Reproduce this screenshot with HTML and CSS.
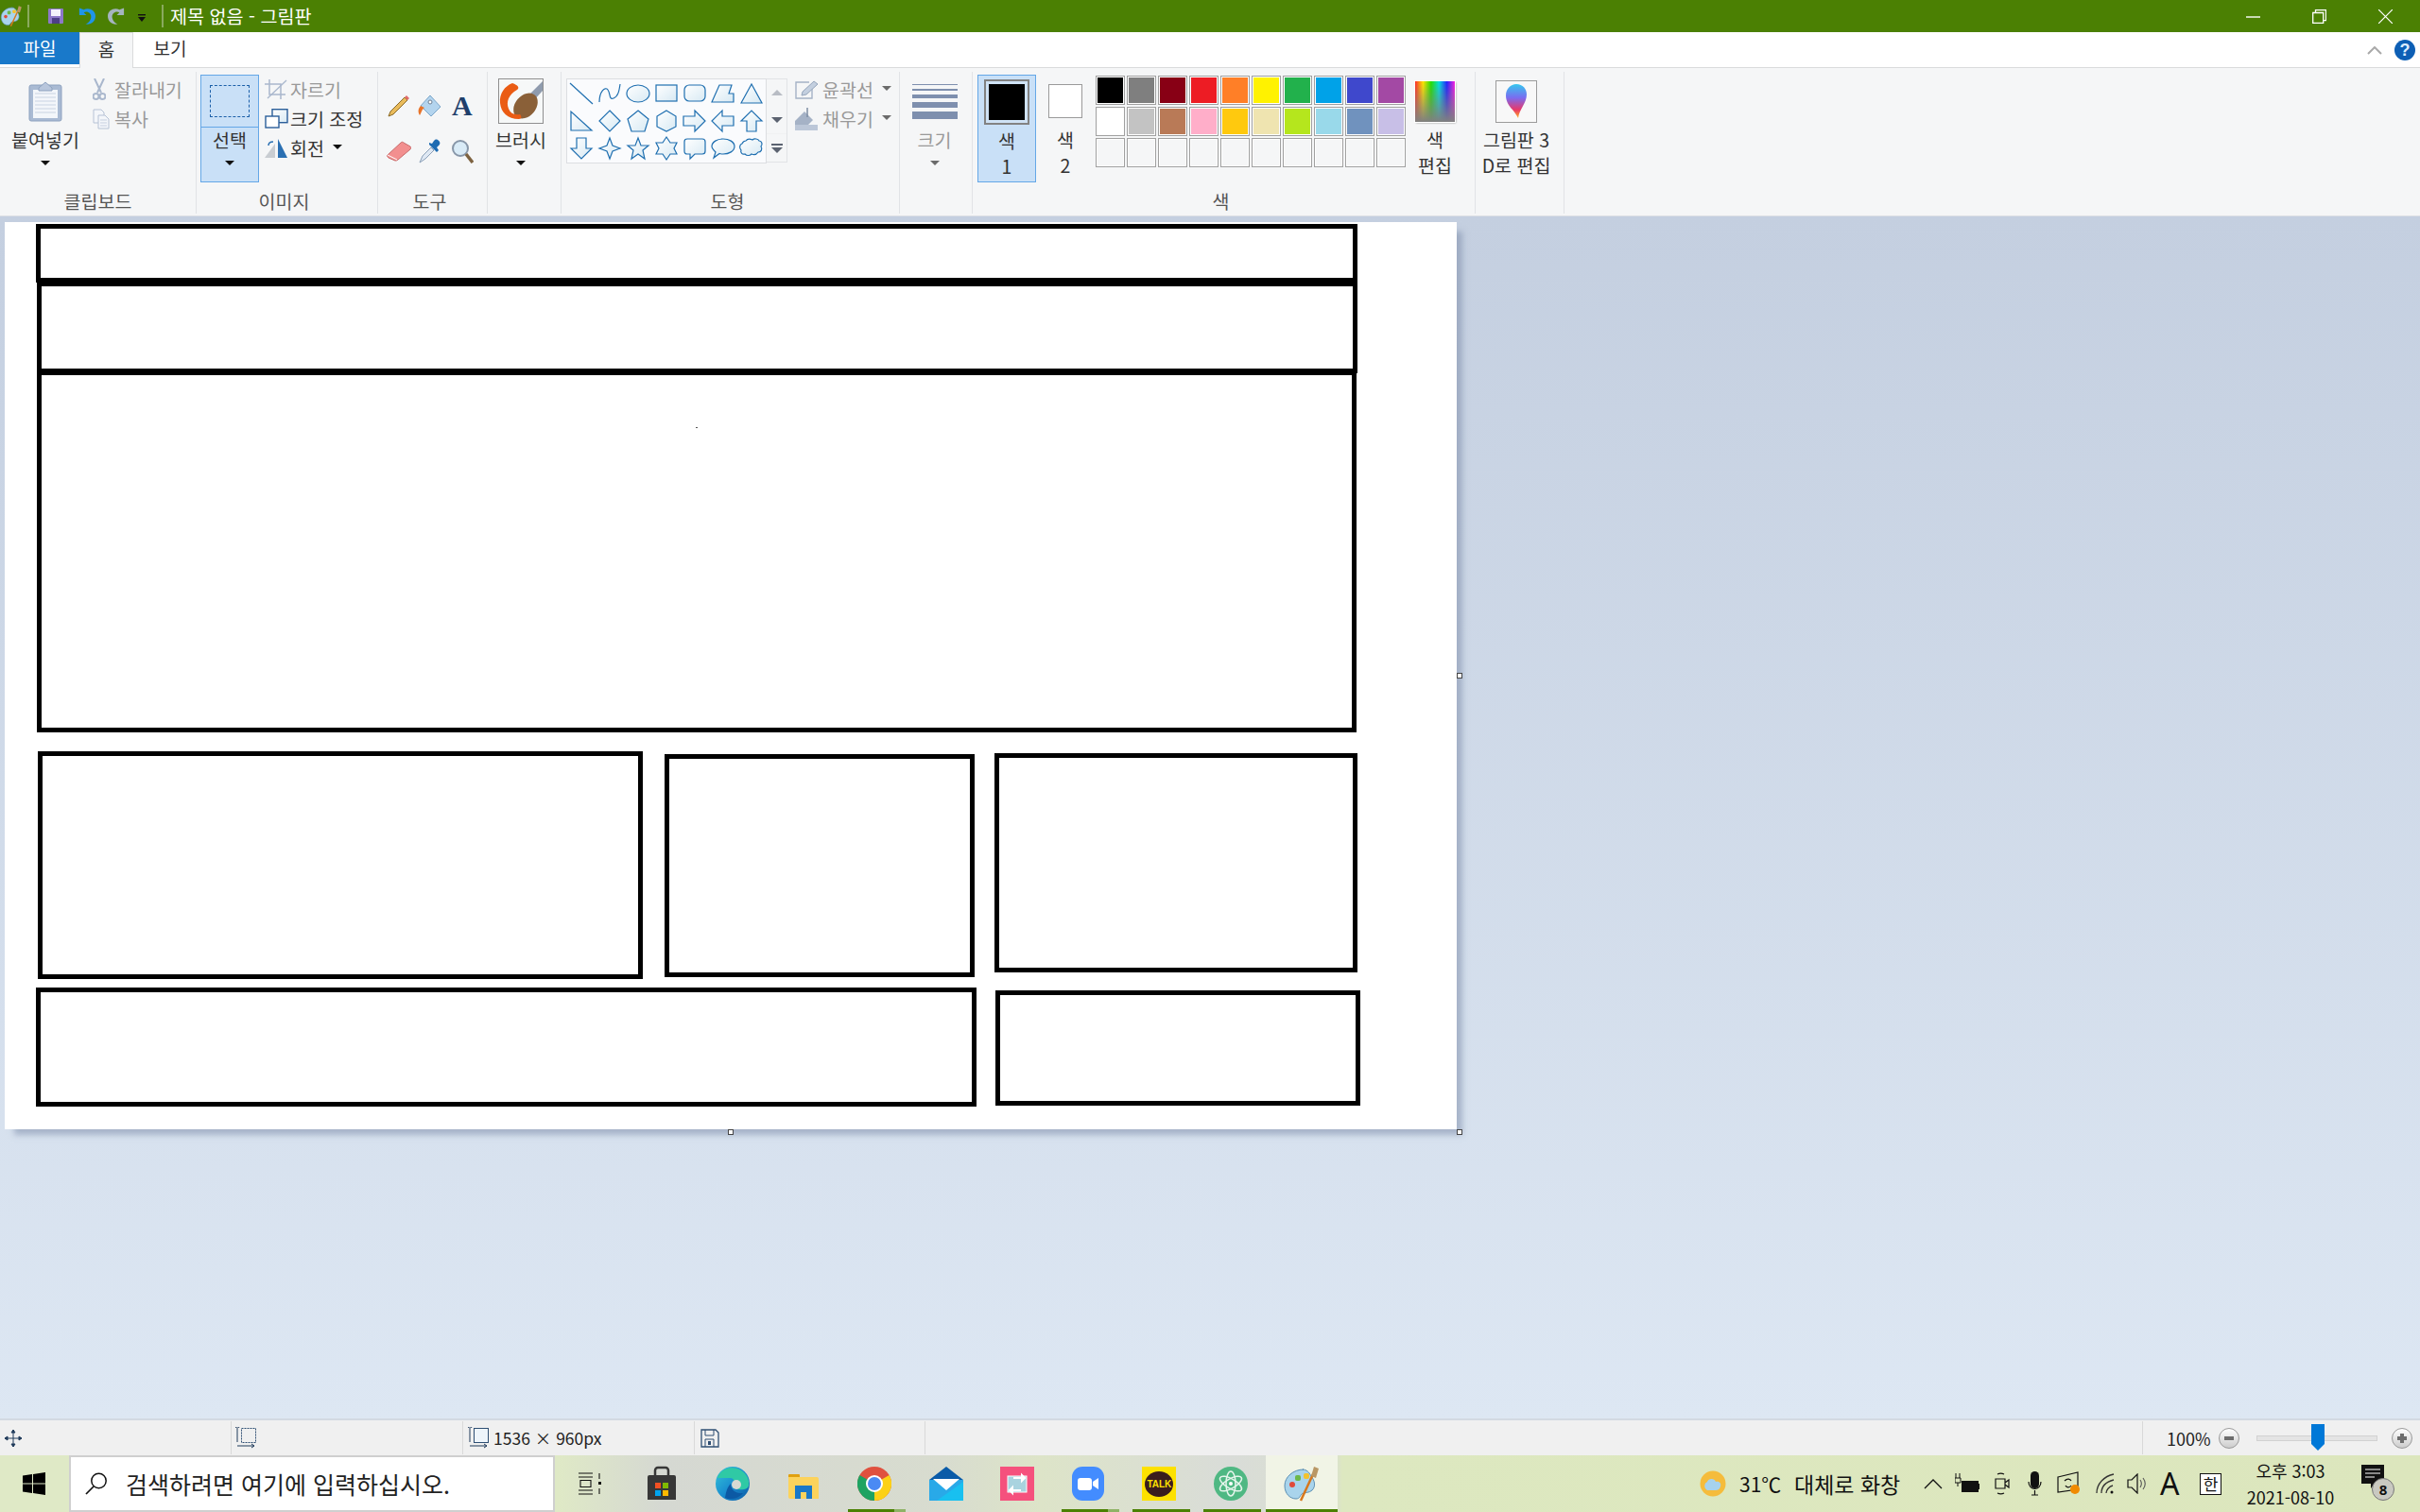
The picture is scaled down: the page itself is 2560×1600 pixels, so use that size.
FILE: index.html
```html
<!DOCTYPE html>
<html lang="ko">
<head>
<meta charset="utf-8">
<title>제목 없음 - 그림판</title>
<link rel="stylesheet" href="styles.css">
</head>
<body>
<svg class="defs" aria-hidden="true"><defs>
<linearGradient id="sh" x1="0" y1="0" x2="1" y2="1"><stop offset="0" stop-color="#ffffff"/><stop offset="1" stop-color="#d7e9f3"/></linearGradient>
<linearGradient id="rain" x1="0" y1="0" x2="1" y2="0"><stop offset="0" stop-color="#ff2a2a"/><stop offset=".2" stop-color="#ffe500"/><stop offset=".4" stop-color="#22e000"/><stop offset=".6" stop-color="#00e0e0"/><stop offset=".8" stop-color="#2020ff"/><stop offset="1" stop-color="#ff20e0"/></linearGradient>
<linearGradient id="fade" x1="0" y1="0" x2="0" y2="1"><stop offset="0" stop-color="#808080" stop-opacity="0"/><stop offset="1" stop-color="#808080"/></linearGradient>
<linearGradient id="drop" x1="0" y1="0" x2="0" y2="1"><stop offset="0" stop-color="#35c8ee"/><stop offset=".4" stop-color="#7a6cf0"/><stop offset=".75" stop-color="#e8386a"/><stop offset="1" stop-color="#ffb020"/></linearGradient>
<linearGradient id="edge" x1="0" y1="0" x2="1" y2="1"><stop offset="0" stop-color="#36c6d8"/><stop offset=".5" stop-color="#1a8fd0"/><stop offset="1" stop-color="#0c59a4"/></linearGradient>
<g id="palette">
<path d="M22 5C11 5 2 13 2 22c0 9 6 14 12 14 4 0 4-3 6-5 3-2 8-1 11-4 4-4 3-10-1-15-2-4-5-7-9-7z" fill="#a9d4ec" stroke="#5b8fb3"/>
<circle cx="10" cy="21" r="3" fill="#e04a3a"/><rect x="13" y="11" width="6" height="6" rx="2" fill="#6cb84a"/><rect x="22" y="9" width="6" height="6" rx="2" fill="#f3c22e"/>
<path d="M19 38L32 10" stroke="#d8771c" stroke-width="2.5"/><path d="M30 12l3-10 5 2-3 10z" fill="#b99765"/>
</g>
</defs></svg>

<div class="app">
  <header class="titlebar">
    <svg class="t-paint" viewBox="0 0 40 40"><use href="#palette"/></svg>
    <i class="t-sep"></i>
    <svg class="t-save" viewBox="0 0 16 16"><rect x="0" y="0" width="16" height="16" rx="1" fill="#8d78c8"/><rect x="3" y="1" width="10" height="7" fill="#f4f2fb"/><rect x="4" y="10" width="8" height="6" fill="#4d3f87"/></svg>
    <svg class="t-undo" viewBox="0 0 20 20"><path d="M2 1v8h8L7 6c4-2 9 1 8 6-.5 3-3 6-6 7 6 1 11-3 11-9 0-7-8-10-13-7z" fill="#1f95e8"/></svg>
    <svg class="t-redo" viewBox="0 0 20 20"><path d="M18 1v8h-8l3-3c-4-2-9 1-8 6 .5 3 3 6 6 7-6 1-11-3-11-9 0-7 8-10 13-7z" fill="#a5b4bf"/></svg>
    <svg class="t-qa" viewBox="0 0 8 9"><rect width="8" height="1.4" fill="#111"/><path d="M0 3h8L4 8z" fill="#111"/></svg>
    <i class="t-sep t-sep2"></i>
    <span class="t-title">제목 없음 - 그림판</span>
    <div class="winctl">
      <svg viewBox="0 0 15 15"><path d="M0 8h15" stroke="#fff" stroke-width="1.4"/></svg>
      <svg viewBox="0 0 15 15"><path d="M3.500 3V.7h11v11H12M.7 3.500h11v11H.7z" fill="none" stroke="#fff" stroke-width="1.300"/></svg>
      <svg viewBox="0 0 15 15"><path d="M0 0l15 15M15 0L0 15" stroke="#fff" stroke-width="1.200"/></svg>
    </div>
  </header>

  <nav class="tabs">
    <span class="tab tab-file">파일</span>
    <span class="tab tab-home">홈</span>
    <span class="tab tab-view">보기</span>
    <svg class="tab-up" viewBox="0 0 16 9"><path d="M1 8l7-7 7 7" fill="none" stroke="#a9a9a9" stroke-width="2"/></svg>
    <span class="help">?</span>
  </nav>

  <section class="ribbon">
    <div class="group g1">
      <div class="gbody">
        <div class="big b-paste">
          <div class="bico"><svg width="36" height="44" viewBox="0 0 36 44"><rect x="1" y="5" width="34" height="38" rx="2" fill="#a9bad3" stroke="#8ea2bf"/><rect x="5" y="10" width="26" height="30" fill="#f3f6fa"/><path d="M7 14h22M7 18h22M7 22h22M7 26h22M7 30h22M7 34h22" stroke="#c9d3e2"/><path d="M11 8l7-6 7 6v3H11z" fill="#b8c6dc" stroke="#8ea2bf"/></svg></div>
          <div class="bline">붙여넣기</div>
          <div class="bline caret-line"><i class="caret"></i></div>
        </div>
        <div class="smalls">
          <div class="srow off"><span class="sico"><svg width="14" height="24" viewBox="0 0 14 24"><path d="M2 0l7 15M12 0L5 15" stroke="#a9b7cd" stroke-width="2"/><circle cx="3.500" cy="19" r="3" fill="none" stroke="#a9b7cd" stroke-width="2"/><circle cx="10.500" cy="19" r="3" fill="none" stroke="#a9b7cd" stroke-width="2"/></svg></span>잘라내기</div>
          <div class="srow off"><span class="sico"><svg width="18" height="22" viewBox="0 0 18 22"><path d="M1 1h8l3 3v11H1z" fill="#f4f6fa" stroke="#b6c2d5"/><path d="M6 7h7l4 4v10H6z" fill="#f4f6fa" stroke="#b6c2d5"/><path d="M8 12h7M8 15h7M8 18h7" stroke="#c5cfdf"/></svg></span>복사</div>
        </div>
      </div>
      <div class="glabel">클립보드</div>
    </div>

    <div class="group g2">
      <div class="gbody">
        <div class="big active b-select">
          <div class="bico bico-split"><i class="dashbox"></i></div>
          <div class="bline">선택</div>
          <div class="bline caret-line"><i class="caret"></i></div>
        </div>
        <div class="smalls s-image">
          <div class="srow off"><span class="sico"><svg width="25" height="21" viewBox="0 0 25 21"><path d="M5 0v16h17M0 5h17v16" fill="none" stroke="#a9b7cd" stroke-width="1.500"/><path d="M3 20L23 1" stroke="#a9b7cd" stroke-width="1.300"/></svg></span>자르기</div>
          <div class="srow"><span class="sico"><svg width="25" height="21" viewBox="0 0 25 21"><rect x="8" y="0.700" width="16" height="14" fill="url(#sh)" stroke="#2b5f9a" stroke-width="1.400"/><rect x="1" y="8" width="14" height="12" fill="#fff" stroke="#2b5f9a" stroke-width="1.400"/></svg></span>크기 조정</div>
          <div class="srow"><span class="sico"><svg width="25" height="20" viewBox="0 0 25 20"><path d="M11 5v15H0z" fill="#c9cdd2"/><path d="M14 0v20h10z" fill="#2a6fb2"/><path d="M4 7c0-3 2-4 5-4" fill="none" stroke="#2a6fb2" stroke-width="1.500"/></svg></span>회전<i class="caret caret-inline"></i></div>
        </div>
      </div>
      <div class="glabel gl-shift">이미지</div>
    </div>

    <div class="group g3">
      <div class="gbody">
        <div class="tools">
          <svg width="24" height="24" viewBox="0 0 24 24"><path d="M3 18L18 3l3 3L6 21l-5 2z" fill="#e9bb5b" stroke="#8a6a2a"/><path d="M18 3l2-2 3 3-2 2z" fill="#e06a6a"/></svg>
          <svg width="26" height="26" viewBox="0 0 26 26"><path d="M13 2l11 12-10 10L3 13z" fill="#b3d4ee" stroke="#7aa5c9"/><path d="M3 13C0 16 0 20 2 23c2-3 2-6 5-8z" fill="#e8742a"/><circle cx="13" cy="9" r="2" fill="#fff" stroke="#6d7f93"/></svg>
          <span class="tool-a">A</span>
          <svg width="26" height="22" viewBox="0 0 26 22"><path d="M1 15L15 2c1-1 2-1 3 0l7 4c1 1 1 2 0 3L12 20c-1 1-2 1-3 1l-7-3c-1-1-2-2-1-3z" fill="#f28f8f" stroke="#c86b6b"/><path d="M1 15l10 5" stroke="#fff"/></svg>
          <svg width="24" height="26" viewBox="0 0 24 26"><path d="M1 25l3-7 9-9 3 3-9 9z" fill="#dfe8f3" stroke="#8ba0b8"/><path d="M11 6l8 8 2-2-2-3 3-3c1-2 0-4-2-5s-3 0-4 1l-2 3-3-1z" fill="#1d6bb2"/></svg>
          <svg width="24" height="26" viewBox="0 0 24 26"><circle cx="10" cy="10" r="8" fill="#d9ebf7" stroke="#8796a8" stroke-width="2"/><path d="M16 16l7 9" stroke="#7d6240" stroke-width="3.500"/></svg>
        </div>
      </div>
      <div class="glabel gl-shift">도구</div>
    </div>

    <div class="group g4">
      <div class="gbody">
        <div class="big b-brush">
          <div class="bico"><svg class="brushicon" width="48" height="48" viewBox="0 0 48 48"><rect x=".5" y=".5" width="47" height="47" fill="#f6f8f8" stroke="#8f8f8f"/><path d="M47 3L31 19l5 6 11-12z" fill="#8f9bad"/><ellipse cx="29" cy="29" rx="11" ry="15" transform="rotate(40 29 29)" fill="#8a6038"/><path d="M15 5C7 8 1 16 2 26c1 10 8 17 20 17 3 0 3-3 1-5-6 1-10-1-12-6-3-7 0-15 9-20 3-2 1-5-5-7z" fill="#ea5c14"/></svg></div>
          <div class="bline">브러시</div>
          <div class="bline caret-line"><i class="caret"></i></div>
        </div>
      </div>
      <div class="glabel">&nbsp;</div>
    </div>

    <div class="group g5">
      <div class="gbody">
        <div class="gallery">
          <div class="shapes">
            <svg viewBox="0 0 24 24"><path d="M0 1l24 22"/></svg>
            <svg viewBox="0 0 24 24"><path class="nf" d="M1 21C1 10 7 4 10 8s1 11 6 9S22 9 23 2"/></svg>
            <svg viewBox="0 0 24 24"><ellipse cx="12" cy="12" rx="12" ry="9"/></svg>
            <svg viewBox="0 0 24 24"><rect x="1" y="3" width="22" height="17"/></svg>
            <svg viewBox="0 0 24 24"><rect x="1" y="3" width="22" height="17" rx="5"/></svg>
            <svg viewBox="0 0 24 24"><path d="M0 21L8 3h13l-3 9h5v9z"/></svg>
            <svg viewBox="0 0 24 24"><path d="M1 22L12 2l11 20z"/></svg>
            <svg viewBox="0 0 24 24"><path d="M1 2v20h22z"/></svg>
            <svg viewBox="0 0 24 24"><path d="M12 1l11 11-11 11L1 12z"/></svg>
            <svg viewBox="0 0 24 24"><path d="M12 1l11 9-4 13H5L1 10z"/></svg>
            <svg viewBox="0 0 24 24"><path d="M12 1l10 6v11l-10 5-10-5V7z"/></svg>
            <svg viewBox="0 0 24 24"><path d="M0 7h12V1l11 11-11 11v-6H0z"/></svg>
            <svg viewBox="0 0 24 24"><path d="M23 7H11V1L0 12l11 11v-6h12z"/></svg>
            <svg viewBox="0 0 24 24"><path d="M7 23V12H1L12 1l11 11h-6v11z"/></svg>
            <svg viewBox="0 0 24 24"><path d="M7 1v11H1l11 11 11-11h-6V1z"/></svg>
            <svg viewBox="0 0 24 24"><path d="M12 1l3 8 8 3-8 3-3 8-3-8-8-3 8-3z"/></svg>
            <svg viewBox="0 0 24 24"><path d="M12 1l3 8h8l-6 5 2 9-7-5-7 5 2-9-6-5h8z"/></svg>
            <svg viewBox="0 0 24 24"><path d="M12 0l4 6h7l-3 6 3 6h-7l-4 6-4-6H1l3-6-3-6h7z"/></svg>
            <svg viewBox="0 0 24 24"><path d="M4 2h16c2 0 3 1 3 3v10c0 2-1 3-3 3H12l-5 5v-5H4c-2 0-3-1-3-3V5c0-2 1-3 3-3z"/></svg>
            <svg viewBox="0 0 24 24"><path d="M12 2c6 0 12 3 12 8s-6 8-12 8c-2 0-3 0-4-.5L2 22l2-6C2 14 0 12 0 10c0-5 6-8 12-8z"/></svg>
            <svg viewBox="0 0 24 24"><path d="M6 4c2-3 5-2 7-1 2-2 6-1 7 1 3 0 4 4 2 6 2 3 0 6-3 6-2 3-5 3-7 2-2 2-5 2-7 0-3 1-5-2-4-4-2-2-2-6 1-7 1-2 3-3 4-3z"/></svg>
          </div>
          <div class="gscroll">
            <span class="gs"><i class="gcaret up"></i></span>
            <span class="gs"><i class="gcaret"></i></span>
            <span class="gs gs-more"><i class="gbar"></i><i class="gcaret"></i></span>
          </div>
        </div>
        <div class="smalls s-outline">
          <div class="srow off"><span class="sico"><svg width="25" height="20" viewBox="0 0 25 20"><path d="M15 2H1v17h17V7" fill="none" stroke="#a5b2c6" stroke-width="1.400"/><path d="M8 12L20 1l4 3-12 11-5 1z" fill="#c3cfdf" stroke="#95a5bb"/></svg></span>윤곽선<i class="caret caret-inline grey"></i></div>
          <div class="srow off"><span class="sico"><svg width="25" height="24" viewBox="0 0 25 24"><path d="M0 14L10 4l9 9-5 5H0z" fill="#a5b2c6"/><path d="M13 0v10" stroke="#7d8ca3" stroke-width="1.500"/><rect y="18" width="24" height="6" fill="#bcc7d8"/></svg></span>채우기<i class="caret caret-inline grey"></i></div>
        </div>
      </div>
      <div class="glabel gl-shift">도형</div>
    </div>

    <div class="group g6">
      <div class="gbody">
        <div class="big off b-size">
          <div class="bico"><div class="sizes"><i class="w1"></i><i class="w2"></i><i class="w4"></i><i class="w6"></i><i class="w8"></i></div></div>
          <div class="bline">크기</div>
          <div class="bline caret-line"><i class="caret grey"></i></div>
        </div>
      </div>
      <div class="glabel">&nbsp;</div>
    </div>

    <div class="group g7">
      <div class="gbody">
        <div class="big active b-color">
          <div class="bico"><span class="col1"></span></div>
          <div class="bline">색</div>
          <div class="bline">1</div>
        </div>
        <div class="big b-color b-color2">
          <div class="bico"><span class="col2"></span></div>
          <div class="bline">색</div>
          <div class="bline">2</div>
        </div>
        <div class="swatches">
          <i class="c c01"></i><i class="c c02"></i><i class="c c03"></i><i class="c c04"></i><i class="c c05"></i><i class="c c06"></i><i class="c c07"></i><i class="c c08"></i><i class="c c09"></i><i class="c c10"></i>
          <i class="c c11"></i><i class="c c12"></i><i class="c c13"></i><i class="c c14"></i><i class="c c15"></i><i class="c c16"></i><i class="c c17"></i><i class="c c18"></i><i class="c c19"></i><i class="c c20"></i>
          <i class="c"></i><i class="c"></i><i class="c"></i><i class="c"></i><i class="c"></i><i class="c"></i><i class="c"></i><i class="c"></i><i class="c"></i><i class="c"></i>
        </div>
        <div class="big b-edit">
          <div class="bico"><svg class="rainbow" width="42" height="43" viewBox="0 0 42 43"><rect width="42" height="43" fill="url(#rain)"/><rect width="42" height="43" fill="url(#fade)"/></svg></div>
          <div class="bline">색</div>
          <div class="bline">편집</div>
        </div>
      </div>
      <div class="glabel gl-shift">색</div>
    </div>

    <div class="group g8">
      <div class="gbody">
        <div class="big b-3d">
          <div class="bico"><span class="box3d"><svg width="24" height="38" viewBox="0 0 24 38"><path d="M12 1c7 0 11 5 11 11 0 9-8 16-9 25-1-2-3-5-6-9C4 24 1 19 1 13 1 6 6 1 12 1z" fill="url(#drop)"/></svg></span></div>
          <div class="bline">그림판 3</div>
          <div class="bline">D로 편집</div>
        </div>
      </div>
      <div class="glabel">&nbsp;</div>
    </div>
  </section>

  <main class="workspace">
    <div class="canvas">
      <i class="r r1"></i><i class="r r2"></i><i class="r r3"></i><i class="r r4"></i><i class="r r5"></i><i class="r r6"></i><i class="r r7"></i><i class="r r8"></i>
      <i class="speck"></i>
      <i class="handle h-r"></i><i class="handle h-b"></i><i class="handle h-c"></i>
    </div>
  </main>

  <footer class="status">
    <div class="scell sc1"><svg width="20" height="20" viewBox="0 0 20 20"><path d="M10 1v18M1 10h18M10 1L8 4h4zM10 19l-2-3h4zM1 10l3-2v4zM19 10l-3-2v4z" fill="#1f3a5a" stroke="#1f3a5a"/></svg></div>
    <div class="scell sc2"><svg width="22" height="24" viewBox="0 0 22 24"><rect x="6.500" y="1.500" width="15" height="15" fill="none" stroke="#2f4f73" stroke-dasharray="2 1"/><path d="M2 0v18M0 3l2-3 2 3M2 22h18M17 20l3 2-3 2" transform="translate(0 -2)" fill="none" stroke="#1f3a5a"/></svg></div>
    <div class="scell sc3"><svg width="22" height="24" viewBox="0 0 22 24"><rect x="6.500" y="1.500" width="15" height="15" fill="#eef5fb" stroke="#2f4f73"/><path d="M2 0v18M0 3l2-3 2 3M2 22h18M17 20l3 2-3 2" transform="translate(0 -2)" fill="none" stroke="#1f3a5a"/></svg><span class="dims">1536 × 960px</span></div>
    <div class="scell sc4"><svg width="20" height="20" viewBox="0 0 20 20"><path d="M1 1h15l3 3v15H1z" fill="none" stroke="#2f4f73" stroke-width="1.300"/><path d="M5 1v6h9V1M5 19v-8h9v8" fill="none" stroke="#2f4f73"/><rect x="8" y="13" width="3" height="4" fill="#2f4f73"/></svg></div>
    <div class="scell sc5"></div>
    <div class="zoombox">
      <span class="zoompct">100%</span>
      <span class="zbtn"><i class="zminus"></i></span>
      <span class="ztrack"><svg class="zthumb" width="14" height="28" viewBox="0 0 14 28"><path d="M0 0h14v21l-7 7-7-7z" fill="#0078d7"/></svg></span>
      <span class="zbtn"><i class="zminus"></i><i class="zplus"></i></span>
    </div>
  </footer>

  <div class="taskbar">
    <div class="start"><svg width="24" height="24" viewBox="0 0 24 24"><path d="M0 3.500l10-1.400v9.400H0zM11 1.900L24 0v11.500H11zM0 12.500h10v9.400L0 20.500zM11 12.500h13V24l-13-1.900z" fill="#000"/></svg></div>
    <div class="search">
      <svg width="24" height="24" viewBox="0 0 24 24"><circle cx="14.500" cy="9" r="7.700" fill="none" stroke="#111" stroke-width="1.500"/><path d="M9 15L1 23" stroke="#111" stroke-width="1.700"/></svg>
      <span>검색하려면 여기에 입력하십시오.</span>
    </div>
    <div class="tv"><svg width="26" height="24" viewBox="0 0 26 24"><path d="M0 1h15M0 5h15M0 19h15M0 23h15M2 8.500h11v7H2zM22 1v6M22 17v6" fill="none" stroke="#111" stroke-width="1.100"/><rect x="21" y="10" width="3" height="3" fill="#111"/></svg></div>
    <div class="tasks">
      <div class="task"><svg width="36" height="38" viewBox="0 0 36 38"><path d="M5 10h26a2 2 0 012 2v24H3V12a2 2 0 012-2z" fill="#373737"/><path d="M11 12V5a3 3 0 013-3h8a3 3 0 013 3v7" fill="none" stroke="#373737" stroke-width="2.500"/><rect x="11" y="18" width="6" height="6" fill="#f25022"/><rect x="19" y="18" width="6" height="6" fill="#7fba00"/><rect x="11" y="26" width="6" height="6" fill="#00a4ef"/><rect x="19" y="26" width="6" height="6" fill="#ffb900"/></svg></div>
      <div class="task"><svg width="36" height="36" viewBox="0 0 36 36"><circle cx="18" cy="18" r="18" fill="url(#edge)"/><path d="M2 12C5 2 18-2 27 4c6 4 9 9 8 16-1 4-6 5-11 4-4-1-6-4-5-7 1-2 0-5-4-5-5 0-10 0-13 0z" fill="#2fc9a5"/><path d="M16 18c0 7 6 11 13 10-4 5-12 8-19 5 1-4 1-10 6-15z" fill="#0c59a4"/><circle cx="22" cy="19" r="5" fill="#d6d9d3"/></svg></div>
      <div class="task"><svg width="32" height="36" viewBox="0 0 32 36"><rect x="0" y="8" width="12" height="6" rx="1" fill="#e0a010"/><path d="M0 11h30a2 2 0 012 2v21H2a2 2 0 01-2-2z" fill="#fcd35c"/><path d="M7 34V20h18v14h-6v-7h-6v7z" fill="#1a78c8"/></svg></div>
      <div class="task tline"><svg width="36" height="36" viewBox="0 0 36 36"><circle cx="18" cy="18" r="18" fill="#e0513f"/><path d="M18 18L2.400 9A18 18 0 0018 36z" fill="#1ea362"/><path d="M18 18V36A18 18 0 0033.600 9z" fill="#fcd116"/><circle cx="18" cy="18" r="9" fill="#fff"/><circle cx="18" cy="18" r="7" fill="#4a8af4"/></svg></div>
      <div class="task"><svg width="36" height="36" viewBox="0 0 36 36"><path d="M18 0l18 14v22H0V14z" fill="#0a5ba8"/><rect y="14" width="36" height="22" fill="#29a9e8"/><path d="M4 13h28L18 25z" fill="#fff"/><path d="M36 36H8l28-20z" fill="#18c0f0"/></svg></div>
      <div class="task"><svg width="36" height="36" viewBox="0 0 36 36"><rect width="36" height="36" fill="#f5517d"/><rect x="8" y="10" width="20" height="17" fill="#a9d3df" stroke="#fff"/><path d="M14 12h12M26 12l-3-3v6zM22 25H10M10 25l3-3v6z" fill="#fff" stroke="#fff" stroke-width="2"/></svg></div>
      <div class="task tline"><svg width="34" height="36" viewBox="0 0 34 36"><rect width="34" height="36" rx="11" fill="#438cff"/><rect x="6" y="12" width="15" height="13" rx="3" fill="#fff"/><path d="M22 16l6-4v12l-6-4z" fill="#fff"/></svg></div>
      <div class="task tline full"><span class="talk"><span class="bubble">TALK</span></span></div>
      <div class="task tline full"><svg width="36" height="36" viewBox="0 0 36 36"><circle cx="18" cy="18" r="18" fill="#4fb883"/><g fill="none" stroke="#e6f5ec" stroke-width="1.500"><ellipse cx="18" cy="18" rx="13" ry="5" transform="rotate(30 18 18)"/><ellipse cx="18" cy="18" rx="13" ry="5" transform="rotate(-30 18 18)"/><ellipse cx="18" cy="18" rx="13" ry="5" transform="rotate(90 18 18)"/></g><circle cx="18" cy="18" r="2" fill="#fff"/></svg></div>
      <div class="task current"><svg width="40" height="40" viewBox="0 0 40 40"><use href="#palette"/></svg></div>
    </div>
    <div class="tray">
      <svg class="ti-weather" width="28" height="28" viewBox="0 0 28 28"><circle cx="14" cy="14" r="13.500" fill="#f5bc3c"/><path d="M8 21a5 5 0 010-9c1-4 8-4 9 0 4-1 6 2 5 5s-3 4-5 4z" fill="#a6d2ee"/></svg>
      <span class="ti-temp">31℃</span>
      <span class="ti-fore">대체로 화창</span>
      <svg class="ti-chev" width="20" height="12" viewBox="0 0 20 12"><path d="M1 11l9-9 9 9" fill="none" stroke="#111" stroke-width="1.300"/></svg>
      <svg class="ti-batt" width="26" height="22" viewBox="0 0 26 22"><path d="M1 0v5M5 0v5M0 5h6v5H0zM3 10v4" stroke="#111" fill="none"/><rect x="7" y="8" width="18" height="12" fill="#111"/><rect x="25" y="11" width="1" height="6" fill="#111"/></svg>
      <svg class="ti-cam" width="16" height="24" viewBox="0 0 16 24"><path d="M3 2c2-1 5-1 7 0M3 22c2 1 5 1 7 0M1 7h10v10H1zM11 11l4-3v8l-4-3" fill="none" stroke="#111" stroke-width="1.200"/></svg>
      <svg class="ti-mic" width="15" height="26" viewBox="0 0 15 26"><rect x="3" y="0" width="9" height="18" rx="4.500" fill="#111"/><path d="M1 11c0 10 13 10 13 0M7.500 20v5M4 25h7" fill="none" stroke="#111" stroke-width="1.200"/></svg>
      <svg class="ti-rec" width="24" height="26" viewBox="0 0 24 26"><path d="M1 6l21-5v18l-21 3zM8 10c3-3 6-2 7 0M15 15c-2 3-5 2-6 0" fill="none" stroke="#111" stroke-width="1.200"/><circle cx="19" cy="19" r="5" fill="#f08a00"/></svg>
      <svg class="ti-wifi" width="20" height="22" viewBox="0 0 20 22"><path d="M1 21C1 11 9 3 19 1M6 21c0-7 5-12 13-14M11 21c0-3 3-7 7-8" fill="none" stroke="#333" stroke-width="1.300"/><circle cx="17" cy="20" r="1.500" fill="#111"/></svg>
      <svg class="ti-spk" width="22" height="22" viewBox="0 0 22 22"><path d="M1 7h4l6-6v20l-6-6H1z" fill="none" stroke="#111" stroke-width="1.200"/><path d="M14 7c2 3 2 5 0 8M17 5c3 4 3 8 0 12" fill="none" stroke="#555" stroke-width="1.100"/></svg>
      <span class="ti-a">A</span>
      <span class="ti-han">한</span>
      <div class="ti-clock"><span>오후 3:03</span><span>2021-08-10</span></div>
      <div class="ti-note">
        <svg width="24" height="26" viewBox="0 0 24 26"><path d="M0 0h24v20h-10l-4 5v-5H0z" fill="#111"/><path d="M4 5h16M4 9h16M4 13h10" stroke="#fff" stroke-width="1.200"/></svg>
        <span class="badge">8</span>
      </div>
    </div>
  </div>
</div>
</body>
</html>
```

FILE: styles.css
```css
* { box-sizing: border-box; margin: 0; padding: 0; }
html, body { width: 2560px; height: 1600px; overflow: hidden; }
body { font-family: "Noto Sans CJK KR", "Noto Sans", sans-serif; font-size: 19px; color: #3c3c3c; }
i { display: block; font-style: normal; }
svg { display: block; flex: none; }
.defs { width: 0; height: 0; }
.app { width: 2560px; height: 1600px; display: flex; flex-direction: column; }

/* title bar */
.titlebar { height: 34px; background: #4b8003; display: flex; align-items: center; flex: none; }
.t-paint { width: 24px; height: 24px; margin-left: 0; }
.t-sep { width: 2px; height: 24px; background: #8aaa5e; margin-left: 5px; }
.t-save { width: 16px; height: 16px; margin-left: 20px; }
.t-undo { width: 19px; height: 20px; margin-left: 15px; }
.t-redo { width: 19px; height: 20px; margin-left: 13px; }
.t-qa { width: 8px; height: 9px; margin-left: 13px; margin-top: 4px; }
.t-sep2 { margin-left: 17px; }
.t-title { color: #fff; margin-left: 7px; font-size: 19.600px; line-height: 34px; }
.winctl { margin-left: auto; display: flex; align-items: center; margin-right: 29px; gap: 55px; }
.winctl svg { width: 15px; height: 15px; }

/* tabs */
.tabs { height: 38px; background: #fff; display: flex; align-items: flex-start; flex: none; border-bottom: 1px solid #dadbdc; }
.tab { display: block; text-align: center; line-height: 34px; font-size: 19px; }
.tab-file { width: 84px; height: 34px; background: #1979ca; color: #fff; }
.tab-home { width: 57px; height: 38px; background: #f5f6f7; border: 1px solid #dadbdc; border-bottom: 0; color: #333; }
.tab-view { width: 78px; color: #333; }
.tab-up { width: 16px; height: 9px; margin-left: auto; margin-top: 15px; }
.help { width: 22px; height: 22px; border-radius: 50%; background: #0d5fb5; color: #dcecff; font: bold 18px/22px "Liberation Sans", sans-serif; text-align: center; margin: 8px 5px 0 13px; }

/* ribbon */
.ribbon { height: 157px; flex: none; background: #f5f6f7; display: flex; padding-top: 4px; border-bottom: 1px solid #dde0e5; }
.group { height: 150px; display: flex; flex-direction: column; border-right: 1px solid #e1e3e6; flex: none; }
.gbody { flex: 1; display: flex; align-items: flex-start; padding-top: 3px; min-height: 0; }
.glabel { height: 26px; line-height: 26px; text-align: center; font-size: 19.500px; color: #555; flex: none; }
.gl-shift { padding-right: 6px; }
.g1 { width: 208px; } .g1 .gbody { padding-left: 8px; }
.g2 { width: 192px; } .g2 .gbody { padding-left: 4px; }
.g3 { width: 116px; } .g3 .gbody { padding-left: 5px; }
.g4 { width: 78px; }
.g5 { width: 358px; } .g5 .gbody { padding-left: 5px; }
.g6 { width: 77px; }
.g7 { width: 532px; } .g7 .gbody { padding-left: 5px; }
.g8 { width: 94px; }

.big { height: 114px; display: flex; flex-direction: column; align-items: center; flex: none; }
.bico { height: 56px; flex: none; display: flex; align-items: center; justify-content: center; }
.bline { height: 27px; line-height: 25px; flex: none; font-size: 19.500px; color: #333; white-space: nowrap; }
.caret-line { display: flex; align-items: center; padding-bottom: 7px; }
.caret { width: 0; height: 0; border-left: 5px solid transparent; border-right: 5px solid transparent; border-top: 5px solid #111; }
.caret.grey { border-top-color: #6b6b6b; }
.caret-inline { margin-left: 9px; margin-top: -2px; }
.active { background: #c9e0f7; border: 1px solid #64a7e7; }
.b-paste { width: 80px; }
.b-select { width: 62px; }
.bico-split { width: 100%; height: 55px; border-bottom: 1px solid #64a7e7; }
.dashbox { width: 42px; height: 34px; border: 1.5px dashed #1b5fa8; }
.b-brush { width: 70px; }
.b-size { width: 73px; }
.off, .off .bline { color: #999; }
.smalls { display: flex; flex-direction: column; margin-left: 10px; }
.s-image { margin-left: 6px; }
.s-image .sico { width: 27px; }
.s-outline { margin-left: 8px; }
.s-outline .sico { width: 29px; }
.srow { height: 31px; display: flex; align-items: center; font-size: 19.500px; line-height: 29px; color: #333; white-space: nowrap; }
.srow.off { color: #999; }
.sico { width: 23px; height: 31px; display: flex; align-items: center; flex: none; }

.tools { display: grid; grid-template-columns: repeat(3, 33.5px); grid-auto-rows: 48px; margin-top: 9px; justify-items: center; align-items: center; }
.tool-a { font: bold 30px/30px "Liberation Serif", serif; color: #1f3f6b; }
.brushicon { display: block; }

.gallery { display: flex; margin-top: 4px; }
.shapes { width: 212px; height: 90px; background: #fafbfd; border: 1px solid #dcdee1; display: grid; grid-template-columns: repeat(7, 30px); grid-auto-rows: 29.300px; padding: 0; justify-items: center; align-items: center; }
.shapes svg { width: 24px; height: 24px; fill: url(#sh); stroke: #1f6fb0; stroke-width: 1.200; overflow: visible; }
.shapes .nf { fill: none; }
.gscroll { width: 22px; height: 89px; border: 1px solid #e1e3e6; border-left: 0; display: flex; flex-direction: column; }
.gs { flex: 1; display: flex; flex-direction: column; align-items: center; justify-content: center; gap: 2px; }
.gs-more { border-top: 1px solid #f0f1f2; }
.gcaret { width: 0; height: 0; border-left: 6px solid transparent; border-right: 6px solid transparent; border-top: 6px solid #5b6270; }
.gcaret.up { border-top: 0; border-bottom: 6px solid #b8bcc4; }
.gbar { width: 12px; height: 2px; background: #5b6270; }

.sizes { width: 48px; display: flex; flex-direction: column; gap: 4px; }
.sizes i { background: #7e8fae; width: 100%; }
.sizes .w1 { height: 1px; } .sizes .w2 { height: 2px; } .sizes .w4 { height: 4px; } .sizes .w6 { height: 6px; } .sizes .w8 { height: 8px; }

.b-color { width: 62px; }
.col1 { width: 48px; height: 48px; background: #000; border: 2px solid #828282; box-shadow: inset 0 0 0 3px #cfe2f5; display: block; }
.col2 { width: 36px; height: 36px; background: #fff; border: 1px solid #9a9a9a; display: block; box-shadow: inset 0 0 0 2px #fff; }
.swatches { display: grid; grid-template-columns: repeat(10, 31px); grid-auto-rows: 31px; gap: 2px; margin: 1px 0 0 1px; }
.c { background: #f5f6f7; border: 1px solid #a0a0a0; box-shadow: inset 0 0 0 1px #fff; }
.c01 { background: #000; } .c02 { background: #7f7f7f; } .c03 { background: #880015; } .c04 { background: #ed1c24; } .c05 { background: #ff7f27; }
.c06 { background: #fff200; } .c07 { background: #22b14c; } .c08 { background: #00a2e8; } .c09 { background: #3f48cc; } .c10 { background: #a349a4; }
.c11 { background: #fff; } .c12 { background: #c3c3c3; } .c13 { background: #b97a57; } .c14 { background: #ffaec9; } .c15 { background: #ffc90e; }
.c16 { background: #efe4b0; } .c17 { background: #b5e61d; } .c18 { background: #99d9ea; } .c19 { background: #7092be; } .c20 { background: #c8bfe7; }
.b-edit { width: 58px; margin-left: 2px; }
.rainbow { box-shadow: 0 0 0 1px #fff, 1px 1px 2px #888; }
.b-3d { width: 86px; }
.box3d { width: 44px; height: 45px; background: #f8f8f8; border: 1px solid #9b9b9b; display: flex; align-items: center; justify-content: center; }

/* workspace */
.workspace { flex: 1; min-height: 0; background: linear-gradient(#c4cfe0, #dde7f3); padding: 6px 0 0 5px; }
.canvas { width: 1536px; height: 960px; background: #fff; position: relative; box-shadow: 8px 8px 6px -2px rgba(120, 135, 165, .5); }
.r { position: absolute; border: 5px solid #000; }
.r1 { left: 33px; top: 2px; width: 1398px; height: 62px; }
.r2 { left: 34px; top: 63px; width: 1397px; height: 97px; border-top-width: 5px; }
.r3 { left: 34px; top: 157px; width: 1396px; height: 383px; }
.r4 { left: 35px; top: 560px; width: 640px; height: 241px; }
.r5 { left: 698px; top: 563px; width: 328px; height: 236px; }
.r6 { left: 1047px; top: 562px; width: 384px; height: 232px; }
.r7 { left: 33px; top: 810px; width: 995px; height: 126px; }
.r8 { left: 1048px; top: 813px; width: 386px; height: 122px; }
.speck { position: absolute; left: 731px; top: 217px; width: 2px; height: 1px; background: #555; }
.handle { position: absolute; width: 6px; height: 6px; background: #fff; border: 1px solid #444; }
.h-r { left: 1536px; top: 477px; }
.h-b { left: 765px; top: 960px; }
.h-c { left: 1536px; top: 960px; }

/* status bar */
.status { height: 39px; flex: none; background: #f0f0f0; border-top: 2px solid #d3d9e2; display: flex; align-items: center; font-size: 18px; color: #222; }
.scell { height: 35px; display: flex; align-items: center; border-right: 1px solid #d9d9d9; flex: none; width: 245px; padding-left: 4px; }
.sc2, .sc3 { padding-left: 4px; }
.sc3 svg { margin-left: 1px; }
.sc4 { width: 244px; padding-left: 6px; }
.sc5 { width: 1288px; }
.dims { margin-left: 5px; font-size: 17.500px; }
.zoombox { display: flex; align-items: center; padding-left: 25px; }
.zoompct { width: 44px; }
.zbtn { width: 22px; height: 22px; border-radius: 50%; background: linear-gradient(#fff, #ccc); border: 1px solid #9a9a9a; margin-left: 11px; position: relative; flex: none; }
.zminus { position: absolute; left: 5px; top: 8px; width: 10px; height: 4px; background: #6d6d6d; }
.zplus { position: absolute; left: 8px; top: 5px; width: 4px; height: 10px; background: #6d6d6d; }
.ztrack { width: 128px; height: 6px; background: #e4e4e4; border: 1px solid #d2d2d2; margin: 0 4px 0 18px; position: relative; flex: none; }
.zthumb { position: absolute; left: 57px; top: -13px; }

/* taskbar */
.taskbar { height: 60px; flex: none; display: flex; align-items: center; background: linear-gradient(90deg, #dfe9c6 0, #dfe9c6 590px, #d5d8d2 700px, #d8dccf 1000px, #dde4c8 1100px, #d9dcd8 1300px, #dae0cf 1413px, #dde8c0 1420px, #dce6bd 2560px); }
.start { width: 73px; height: 60px; display: flex; align-items: center; justify-content: center; flex: none; padding-right: 1px; }
.search { width: 514px; height: 60px; background: #fff; border: 2px solid #cfcfcf; display: flex; align-items: center; padding-left: 15px; flex: none; font-size: 25px; color: #222; white-space: nowrap; }
.search span { margin-left: 19px; }
.tv { width: 75px; height: 60px; display: flex; align-items: center; justify-content: center; flex: none; }
.tasks { display: flex; flex: none; }
.task { width: 75.250px; height: 60px; display: flex; align-items: center; justify-content: center; position: relative; flex: none; }
.tline::after { content: ""; position: absolute; left: 9px; right: 5px; bottom: 0; height: 3px; background: linear-gradient(90deg, #4b8003 0, #4b8003 80%, #8fb366 80%); }
.tline.full::after { background: #4b8003; }
.current { background: #f1f4e6; }
.current::after { content: ""; position: absolute; left: 0; right: 0; bottom: 0; height: 3px; background: #4b8003; }
.talk { width: 36px; height: 36px; background: #fde100; display: flex; align-items: center; justify-content: center; }
.bubble { width: 30px; height: 27px; border-radius: 50%; background: #3a1d1d; color: #fde100; font: bold 10px/27px "Liberation Sans", sans-serif; text-align: center; }
.tray { margin-left: auto; width: 762px; display: flex; align-items: center; font-size: 21px; color: #111; white-space: nowrap; flex: none; }
.ti-temp { width: 43px; margin-left: 14px; }
.ti-fore { width: 112px; margin-left: 15px; font-size: 23px; }
.ti-chev { margin-left: 25px; }
.ti-batt { margin-left: 13px; }
.ti-cam { margin-left: 16px; }
.ti-mic { margin-left: 19px; }
.ti-rec { margin-left: 16px; }
.ti-wifi { margin-left: 17px; }
.ti-spk { margin-left: 13px; }
.ti-a { width: 20px; margin-left: 13px; font: 32px/36px "Noto Sans", sans-serif; text-align: center; }
.ti-han { width: 23px; height: 23px; margin-left: 22px; border: 1px solid #111; background: #fff; font-size: 17px; line-height: 20px; text-align: center; }
.ti-clock { width: 100px; margin-left: 23px; display: flex; flex-direction: column; align-items: center; font-size: 18px; line-height: 28px; }
.ti-note { width: 36px; height: 40px; margin-left: 25px; position: relative; }
.badge { position: absolute; left: 11px; top: 14px; width: 24px; height: 24px; border-radius: 50%; background: #c9c9c1; border: 1px solid #777; font: bold 15px/22px "Noto Sans", sans-serif; text-align: center; color: #111; }
```
